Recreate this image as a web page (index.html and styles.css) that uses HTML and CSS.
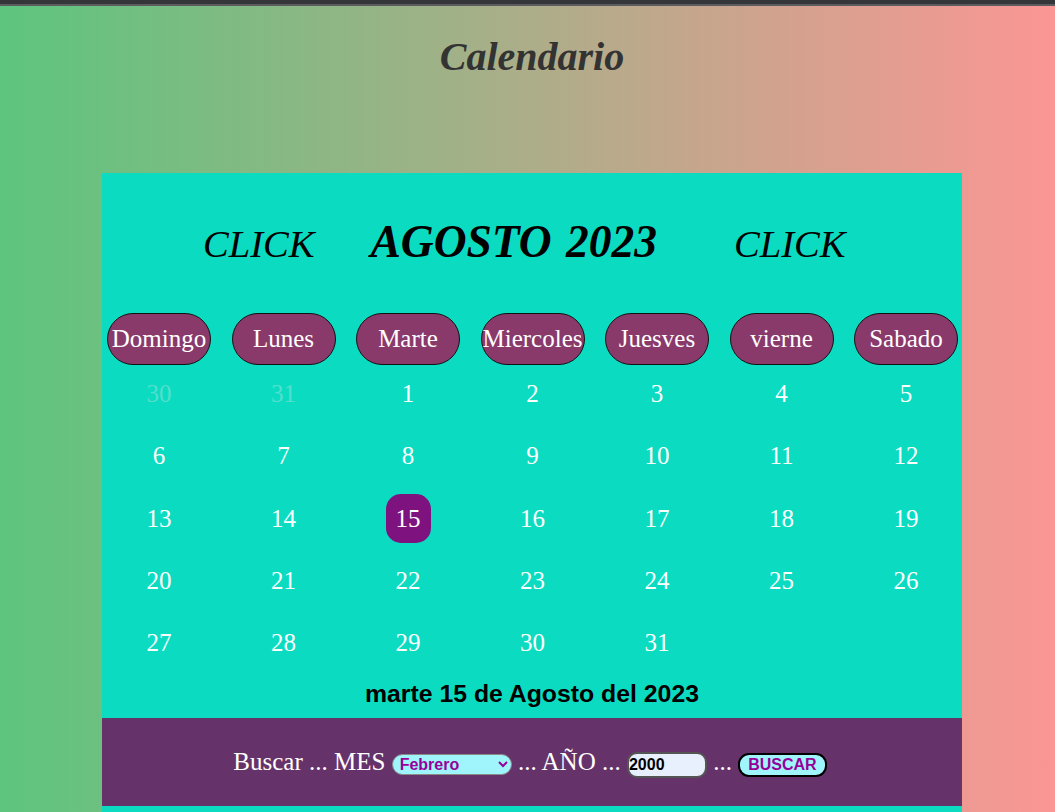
FILE: index.html
```html
<!DOCTYPE html>
<html lang="es">
<head>
<meta charset="utf-8">
<title>Calendario</title>
<link rel="stylesheet" href="styles.css">
</head>
<body>
<div class="topbar"></div>
<div class="page">
  <h1 class="title">Calendario</h1>
  <section class="calendar">
    <div class="cal-head">
      <span class="click click-prev">CLICK</span>
      <span class="month">AGOSTO 2023</span>
      <span class="click click-next">CLICK</span>
    </div>
    <div class="weekdays">
      <div class="pill">Domingo</div>
      <div class="pill">Lunes</div>
      <div class="pill">Marte</div>
      <div class="pill">Miercoles</div>
      <div class="pill">Juesves</div>
      <div class="pill">vierne</div>
      <div class="pill">Sabado</div>
    </div>
    <div class="days">
      <div class="day other">30</div>
      <div class="day other">31</div>
      <div class="day">1</div>
      <div class="day">2</div>
      <div class="day">3</div>
      <div class="day">4</div>
      <div class="day">5</div>
      <div class="day">6</div>
      <div class="day">7</div>
      <div class="day">8</div>
      <div class="day">9</div>
      <div class="day">10</div>
      <div class="day">11</div>
      <div class="day">12</div>
      <div class="day">13</div>
      <div class="day">14</div>
      <div class="day today">15</div>
      <div class="day">16</div>
      <div class="day">17</div>
      <div class="day">18</div>
      <div class="day">19</div>
      <div class="day">20</div>
      <div class="day">21</div>
      <div class="day">22</div>
      <div class="day">23</div>
      <div class="day">24</div>
      <div class="day">25</div>
      <div class="day">26</div>
      <div class="day">27</div>
      <div class="day">28</div>
      <div class="day">29</div>
      <div class="day">30</div>
      <div class="day">31</div>
    </div>
    <div class="current">marte 15 de Agosto del 2023</div>
    <div class="search">
      <div class="search-line">Buscar ... MES <select class="sel-month">
          <option>Enero</option>
          <option selected>Febrero</option>
          <option>Marzo</option>
        </select> ... AÑO ... <input class="in-year" type="text" value="2000"> ... <button class="btn-search" type="button">BUSCAR</button></div>
    </div>
  </section>
</div>
</body>
</html>
```
FILE: styles.css
```css
html, body {
  margin: 0;
  padding: 0;
}
body {
  min-height: 812px;
  background: linear-gradient(to right, #5dc57e, #fb9694);
  font-family: "Liberation Serif", "Times New Roman", serif;
}
.topbar {
  height: 4px;
  background: #35363a;
  border-bottom: 2px solid #5c5c5e;
}
.page {
  margin-left: 102px;
  width: 860px;
}
.title {
  margin: 28px 0 0;
  text-align: center;
  font-size: 40px;
  font-weight: bold;
  font-style: italic;
  color: #333333;
  line-height: 46px;
}
.calendar {
  margin-top: 93px;
  background: #0bdcc1;
  padding-bottom: 10px;
}
.cal-head {
  display: flex;
  align-items: baseline;
  justify-content: flex-start;
  padding: 42px 0 0 101px;
  height: 95px;
  box-sizing: border-box;
}
.click {
  font-size: 38.6px;
  font-style: italic;
  color: #000;
}
.month {
  font-size: 45.5px;
  font-weight: bold;
  font-style: italic;
  color: #000;
  word-spacing: 3px;
  margin: 0 77px 0 56px;
}
.weekdays,
.days {
  display: grid;
  grid-template-columns: repeat(7, 1fr);
  column-gap: 20.5px;
  padding: 0 4px 0 5px;
}
.weekdays {
  margin-top: 45px;
}
.pill {
  height: 52px;
  box-sizing: border-box;
  border: 1px solid #111;
  border-radius: 26px;
  background: #893a6b;
  color: #fff;
  font-size: 25px;
  display: flex;
  align-items: center;
  justify-content: center;
  white-space: nowrap;
}
.days {
  margin-top: 4.5px;
  row-gap: 13.25px;
  grid-auto-rows: 49px;
}
.day {
  justify-self: center;
  width: 45px;
  height: 49px;
  display: flex;
  align-items: center;
  justify-content: center;
  color: #fff;
  font-size: 25px;
  border-radius: 15px;
}
.day.other {
  color: #52dfcd;
}
.day.today {
  background: #7e127f;
}
.current {
  margin: 12px 0 10px;
  text-align: center;
  font-family: "Liberation Sans", Arial, sans-serif;
  font-weight: bold;
  font-size: 24.8px;
  color: #000;
  line-height: 28px;
}
.search {
  background: #65336a;
  height: 88px;
  display: flex;
  align-items: center;
  justify-content: center;
  padding-top: 2px;
  box-sizing: border-box;
}
.search-line {
  color: #fff;
  font-size: 25px;
  margin-left: -4px;
}
.sel-month {
  width: 120px;
  height: 21px;
  font-family: "Liberation Sans", Arial, sans-serif;
  font-weight: bold;
  font-size: 16px;
  color: #98009a;
  background: #9ff5fb;
  border: 1px solid #8a8a8a;
  border-radius: 11px;
  padding: 0 3px;
}
.in-year {
  width: 80px;
  height: 26px;
  box-sizing: border-box;
  font-family: "Liberation Sans", Arial, sans-serif;
  font-weight: bold;
  font-size: 16px;
  color: #000;
  background: #e8f0fe;
  border: 2px solid #555;
  border-radius: 10px;
  padding: 0 0;
}
.btn-search {
  height: 24px;
  box-sizing: border-box;
  font-family: "Liberation Sans", Arial, sans-serif;
  font-weight: bold;
  font-size: 16px;
  color: #98009a;
  background: #9ff5fb;
  border: 2px solid #000;
  border-radius: 11px;
  padding: 0 8px;
  line-height: 20px;
}
```
